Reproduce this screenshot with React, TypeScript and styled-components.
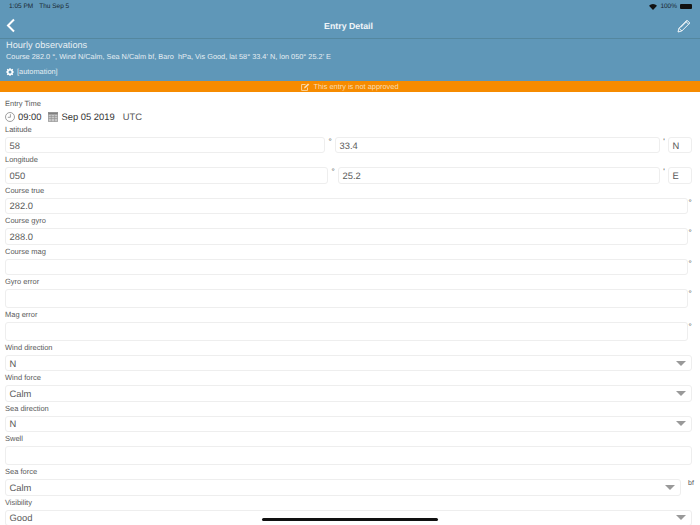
import React from "react";
import styled, { createGlobalStyle } from "styled-components";

const GlobalStyle = createGlobalStyle`
  html, body {
    margin: 0;
    padding: 0;
    background: #ffffff;
  }
  body {
    width: 700px;
    height: 525px;
    overflow: hidden;
    font-family: "Liberation Sans", Arial, sans-serif;
    text-rendering: geometricPrecision;
  }
`;

const ChevronIcon = () => (
  <svg width="10" height="15" viewBox="0 0 10 15">
    <path d="M8 1.5 L2 7.5 L8 13.5" fill="none" stroke="#fff" strokeWidth="2" />
  </svg>
);

const PencilIcon = () => (
  <svg width="14" height="14" viewBox="0 0 14 14">
    <path
      d="M1 13 L2 9.2 L10 1.2 L12.8 4 L4.8 12 Z M2 9.2 L4.8 12 M8.8 2.4 L11.6 5.2 M3.6 8.6 L10 2.2"
      fill="none"
      stroke="#fff"
      strokeWidth="0.9"
      strokeLinejoin="round"
    />
  </svg>
);

const WifiIcon = () => (
  <svg width="8" height="6" viewBox="0 0 8 6">
    <path d="M0 1.8 A5.6 5.6 0 0 1 8 1.8 L4 6 Z" fill="#111" />
  </svg>
);

const GearIcon = () => (
  <svg width="8" height="8" viewBox="0 0 8 8">
    <circle cx="4" cy="4" r="2.3" fill="none" stroke="#fff" strokeWidth="1.6" />
    <path
      d="M4 0 V1.4 M4 6.6 V8 M0 4 H1.4 M6.6 4 H8 M1.2 1.2 L2.1 2.1 M5.9 5.9 L6.8 6.8 M1.2 6.8 L2.1 5.9 M5.9 2.1 L6.8 1.2"
      stroke="#fff"
      strokeWidth="1.2"
    />
  </svg>
);

const NoteIcon = () => (
  <svg width="9" height="8" viewBox="0 0 9 8">
    <path d="M6.5 4.5 V7.4 H0.6 V1.5 H4.5" fill="none" stroke="#fbdcae" strokeWidth="0.9" />
    <path d="M3 5.4 L3.4 3.8 L7 0.4 L8.4 1.6 L4.6 5 Z" fill="#fbdcae" />
  </svg>
);

const ClockIcon = () => (
  <svg width="10" height="10" viewBox="0 0 10 10">
    <circle cx="5" cy="5" r="4.5" fill="none" stroke="#777" strokeWidth="0.7" />
    <path d="M5.4 2.2 V5.3 H2.8" fill="none" stroke="#777" strokeWidth="0.7" />
  </svg>
);

const CalendarIcon = () => (
  <svg width="10" height="10" viewBox="0 0 10 10">
    <rect x="0.3" y="0.5" width="9.4" height="9" fill="#c9c9c9" stroke="#888" strokeWidth="0.6" />
    <rect x="0.3" y="0.5" width="9.4" height="2" fill="#808080" />
    <path d="M0.5 4.5 H9.5 M0.5 6.5 H9.5 M3.3 3 V9.5 M6.6 3 V9.5" stroke="#8f8f8f" strokeWidth="0.6" />
  </svg>
);

const Page = styled.div`
  width: 700px;
  height: 525px;
  overflow: hidden;
  position: relative;
  background: #fff;
`;

const Header = styled.header`
  height: 81px;
  background: #5f97b8;
  color: #fff;
`;

const StatusBar = styled.div`
  height: 13px;
  padding: 0 8px 0 9px;
  display: flex;
  align-items: center;
  justify-content: space-between;
  font-size: 6.5px;
  color: #1a2730;
`;

const StatusGroup = styled.div<{ $gap: number }>`
  display: flex;
  align-items: center;
  gap: ${(p) => p.$gap}px;
`;

const Battery = styled.span`
  display: block;
  width: 12px;
  height: 5px;
  border-radius: 1px;
  background: #111;
`;

const NavBar = styled.div`
  height: 26px;
  box-sizing: border-box;
  padding: 0 9px 0 6px;
  display: grid;
  grid-template-columns: 1fr auto 1fr;
  align-items: center;
  border-bottom: 1px solid #54879f;
`;

const NavRight = styled.div`
  display: flex;
  justify-content: flex-end;
`;

const NavLeft = styled.div`
  display: flex;
`;

const NavTitle = styled.div`
  font-size: 8.8px;
  font-weight: 700;
  color: #f0f5f8;
`;

const Summary = styled.div`
  padding: 0 6px;
`;

const SummaryTitle = styled.div`
  font-size: 9.2px;
  line-height: 12px;
  color: #e9f1f5;
`;

const SummaryText = styled.div`
  font-size: 7.35px;
  line-height: 12px;
  color: #e4edf2;
  white-space: pre;
`;

const Automation = styled.div`
  display: flex;
  align-items: center;
  gap: 3px;
  margin-top: 4px;
  font-size: 7.4px;
  line-height: 10px;
  color: #e4edf2;
`;

const Warning = styled.div`
  height: 11px;
  background: #f68b00;
  color: #fbdcae;
  display: flex;
  align-items: center;
  justify-content: center;
  gap: 3px;
  font-size: 7.4px;
`;

const Form = styled.main`
  padding: 5px 8px 0 5px;
`;

const Label = styled.div`
  font-size: 7.5px;
  line-height: 14px;
  height: 14px;
  color: #5a5a5a;
`;

const TimeRow = styled.div`
  display: flex;
  align-items: center;
  height: 13px;
  margin-top: -1px;
  font-size: 9.4px;
  color: #333;
`;

const TimePart = styled.span<{ $space: number }>`
  display: flex;
  align-items: center;
  gap: 3px;
  margin-right: ${(p) => p.$space}px;
`;

const Utc = styled.span`
  color: #555;
`;

const Row = styled.div`
  display: flex;
  align-items: flex-start;
`;

const Box = styled.div<{ $w?: number; $h?: number }>`
  ${(p) => (p.$w ? `width: ${p.$w}px; flex: none;` : "flex: 1; min-width: 0;")}
  height: ${(p) => p.$h ?? 16.4}px;
  box-sizing: border-box;
  border: 1px solid #eeeeee;
  border-radius: 3px;
  padding: 0 4px 0 3.5px;
  display: flex;
  align-items: center;
  justify-content: space-between;
  font-size: 9.4px;
  color: #5a5a5a;
`;

const Unit = styled.span<{ $w: number }>`
  flex: none;
  width: ${(p) => p.$w}px;
  margin-top: 1px;
  font-size: 8px;
  line-height: 8px;
  text-align: center;
  color: #444;
`;

const ForceUnit = styled.span`
  flex: none;
  width: 11px;
  margin-top: 1px;
  padding-left: 7px;
  box-sizing: border-box;
  font-size: 7px;
  line-height: 8px;
  color: #555;
  white-space: nowrap;
`;

const Caret = styled.span`
  display: block;
  width: 0;
  height: 0;
  margin-right: 1px;
  border-left: 5.5px solid transparent;
  border-right: 5.5px solid transparent;
  border-top: 5px solid #999;
`;

const HomeIndicator = styled.div`
  position: absolute;
  left: 262px;
  bottom: 4px;
  width: 176px;
  height: 3px;
  border-radius: 2px;
  background: #111;
`;

const TextField = ({ label, value, h }: { label: string; value?: string; h?: number }) => (
  <>
    <Label>{label}</Label>
    <Row>
      <Box $h={h}>{value}</Box>
      <Unit $w={4}>°</Unit>
    </Row>
  </>
);

const SelectField = ({ label, value, unit }: { label: string; value: string; unit?: string }) => (
  <>
    <Label>{label}</Label>
    <Row>
      <Box>
        {value}
        <Caret />
      </Box>
      {unit && <ForceUnit>{unit}</ForceUnit>}
    </Row>
  </>
);

export default function App() {
  return (
    <Page>
      <GlobalStyle />
      <Header>
        <StatusBar>
          <StatusGroup $gap={6}>
            <span>1:05 PM</span>
            <span>Thu Sep 5</span>
          </StatusGroup>
          <StatusGroup $gap={3}>
            <WifiIcon />
            <span>100%</span>
            <Battery />
          </StatusGroup>
        </StatusBar>
        <NavBar>
          <NavLeft>
            <ChevronIcon />
          </NavLeft>
          <NavTitle>Entry Detail</NavTitle>
          <NavRight>
            <PencilIcon />
          </NavRight>
        </NavBar>
        <Summary>
          <SummaryTitle>Hourly observations</SummaryTitle>
          <SummaryText>
            {"Course 282.0 °, Wind N/Calm, Sea N/Calm bf, Baro  hPa, Vis Good, lat 58° 33.4' N, lon 050° 25.2' E"}
          </SummaryText>
          <Automation>
            <GearIcon />
            [automation]
          </Automation>
        </Summary>
      </Header>
      <Warning>
        <NoteIcon />
        This entry is not approved
      </Warning>
      <Form>
        <Label>Entry Time</Label>
        <TimeRow>
          <TimePart $space={7}>
            <ClockIcon />
            09:00
          </TimePart>
          <TimePart $space={8}>
            <CalendarIcon />
            Sep 05 2019
          </TimePart>
          <Utc>UTC</Utc>
        </TimeRow>
        <Label>Latitude</Label>
        <Row>
          <Box $w={320}>58</Box>
          <Unit $w={10}>°</Unit>
          <Box>33.4</Box>
          <Unit $w={8}>'</Unit>
          <Box $w={24}>N</Box>
        </Row>
        <Label>Longitude</Label>
        <Row>
          <Box $w={323}>050</Box>
          <Unit $w={10}>°</Unit>
          <Box>25.2</Box>
          <Unit $w={8}>'</Unit>
          <Box $w={24}>E</Box>
        </Row>
        <TextField label="Course true" value="282.0" />
        <TextField label="Course gyro" value="288.0" />
        <TextField label="Course mag" />
        <TextField label="Gyro error" h={19} />
        <TextField label="Mag error" h={19} />
        <SelectField label="Wind direction" value="N" />
        <SelectField label="Wind force" value="Calm" />
        <SelectField label="Sea direction" value="N" />
        <Label>Swell</Label>
        <Box $h={19} />
        <SelectField label="Sea force" value="Calm" unit="bf" />
        <SelectField label="Visibility" value="Good" />
      </Form>
      <HomeIndicator />
    </Page>
  );
}
